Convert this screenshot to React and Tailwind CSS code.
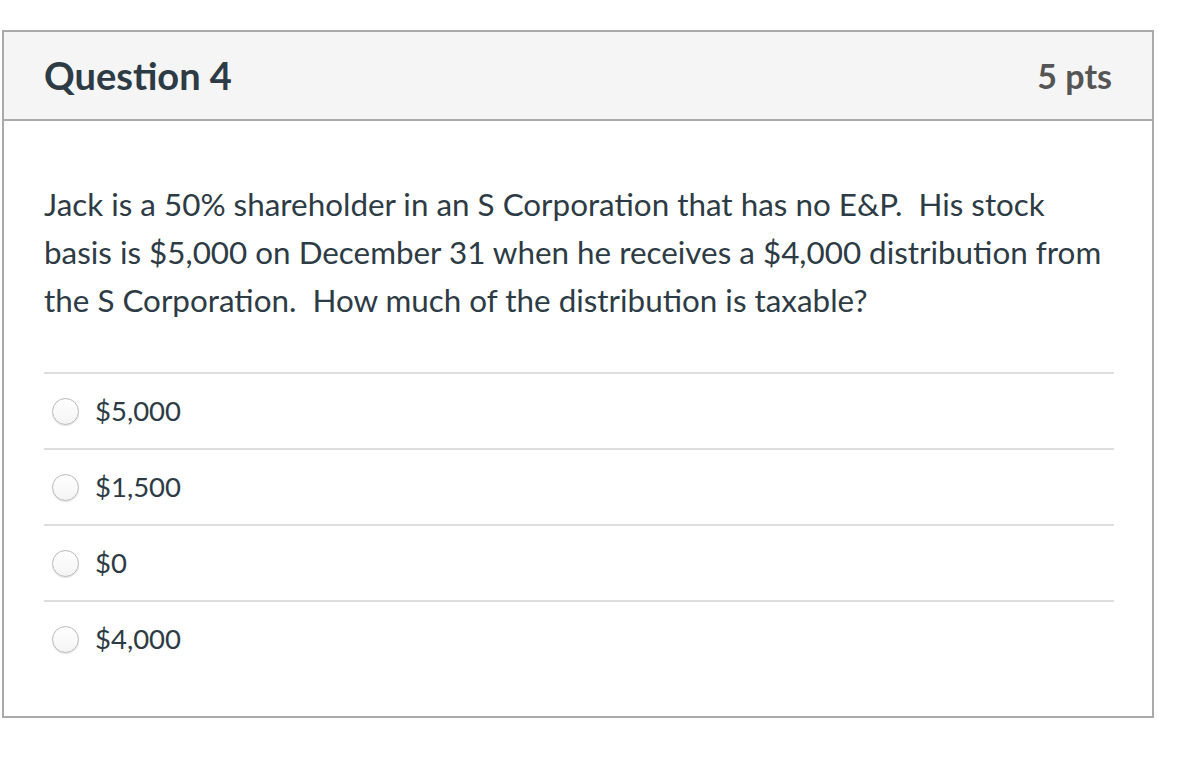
import React from 'react';

const answers = ['$5,000', '$1,500', '$0', '$4,000'];

const Radio = () => (
  <span className="block h-[27px] w-[27px] shrink-0 rounded-full border border-[#b8b8b8] bg-gradient-to-b from-white to-[#f4f4f4] shadow-[0_1px_1px_rgba(0,0,0,0.12)]" />
);

export default function App() {
  return (
    <div className="min-h-[772px] bg-white pt-[30px] pl-[2px]" style={{ fontFamily: 'Lato, "Open Sans", sans-serif' }}>
      <div className="w-[1152px] border-2 border-[#aaaaaa] text-[#2d3b45]">
        <div className="flex h-[89px] items-center justify-between border-b-2 border-[#aaaaaa] bg-[#f5f5f5] pl-[40px] pr-[40px]">
          <h2 className="text-[38px] font-bold">Question 4</h2>
          <span className="text-[34px] font-bold text-[#555555]">5 pts</span>
        </div>
        <div className="px-[40px] pt-[59px] pb-[40px]">
          <p className="text-[31.4px] leading-[48px]">
            Jack is a 50% shareholder in an S Corporation that has no E&amp;P.&nbsp; His stock basis is $5,000 on December 31 when he receives a $4,000 distribution from the S Corporation.&nbsp; How much of the distribution is taxable?
          </p>
          <div className="mt-[48px] mr-[-2px]">
            {answers.map((a) => (
              <div key={a} className="flex h-[76px] items-center gap-[16px] border-t-2 border-[#dddddd] pl-[8px]">
                <Radio />
                <span className="text-[27.5px]">{a}</span>
              </div>
            ))}
          </div>
        </div>
      </div>
    </div>
  );
}
